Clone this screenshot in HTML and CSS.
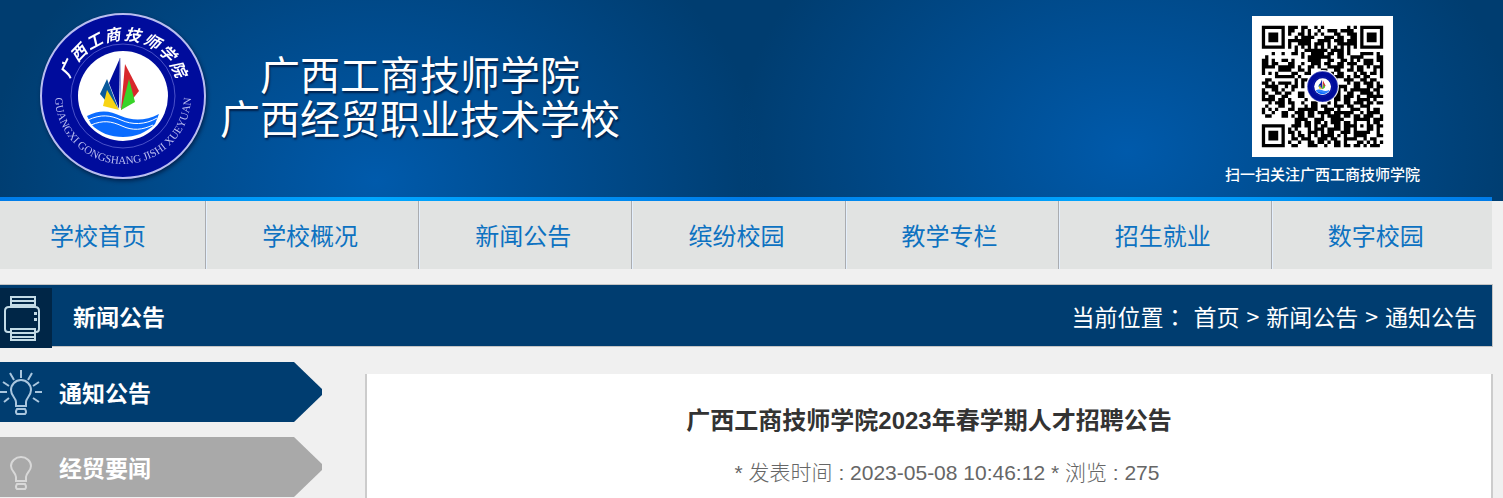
FILE: index.html
```
<!DOCTYPE html>
<html lang="zh-CN">
  <head>
    <meta charset="UTF-8" />
    <meta name="viewport" content="width=device-width, initial-scale=1.0" />
    <title>广西工商技师学院2023年春学期人才招聘公告</title>
    <link rel="stylesheet" href="styles.css" />
  </head>
  <body>
    <header class="header">
      <svg class="logo" viewBox="0 0 166 166" role="img" aria-label="校徽">
        <defs>
          <path id="ring" d="M15 83a68 68 0 0 0 136 0" />
        </defs>
        <g id="badge">
          <circle cx="83" cy="83" r="82" fill="#000c9c" stroke="#b9bdf0" stroke-width="2" />
          <circle cx="83" cy="83" r="52" fill="none" stroke="#4a52c8" />
          <circle cx="83" cy="83" r="45" fill="#fff" />
          <path d="M67 66l-7 15 5 6 13 8z" fill="#0a5a9c" />
          <path d="M80 45L69 70l10 26z" fill="#000c9c" />
          <path d="M80 45l1 50" stroke="#8d92d0" />
          <path d="M85 51l14 27-8 10-10 9z" fill="#d8282c" />
          <path d="M89 66l6 23-14 8z" fill="#38d428" />
          <path d="M67 77l-4 16 16 4z" fill="#f8d414" />
          <path d="M47 103c14-7 23-5 34 0s25 5 38-2l-4 10c-9 9-20 13-32 13s-24-4-32-13z" fill="#0a6cff" />
          <path d="M48 107c13-6 22-5 33 0s24 5 36-2M51 112c12-5 20-4 31 1s20 4 31-1" fill="none" stroke="#fff" />
        </g>
        <g class="seal-name">
          <text x="83" y="27" transform="rotate(-64 83 83)">广</text>
          <text x="83" y="27" transform="rotate(-46 83 83)">西</text>
          <text x="83" y="27" transform="rotate(-28 83 83)">工</text>
          <text x="83" y="27" transform="rotate(-10 83 83)">商</text>
          <text x="83" y="27" transform="rotate(9 83 83)">技</text>
          <text x="83" y="27" transform="rotate(28 83 83)">师</text>
          <text x="83" y="27" transform="rotate(46 83 83)">学</text>
          <text x="83" y="27" transform="rotate(64 83 83)">院</text>
        </g>
        <text class="seal-latin">
          <textPath href="#ring" startOffset="50%">GUANGXI GONGSHANG JISHI XUEYUAN</textPath>
        </text>
      </svg>
      <div class="school">
        <p>广西工商技师学院</p>
        <p>广西经贸职业技术学校</p>
      </div>
      <div class="follow">
        <svg class="qr" viewBox="-3 -3 43 43" role="img" aria-label="二维码">
          <path id="modules" />
          <circle cx="18.5" cy="18.5" r="5" fill="#fff" />
          <use href="#badge" transform="translate(13.8 13.8) scale(.057)" />
        </svg>
        <p>扫一扫关注广西工商技师学院</p>
      </div>
    </header>

    <nav class="nav">
      <a href="#">学校首页</a>
      <a href="#">学校概况</a>
      <a href="#">新闻公告</a>
      <a href="#">缤纷校园</a>
      <a href="#">教学专栏</a>
      <a href="#">招生就业</a>
      <a href="#">数字校园</a>
    </nav>

    <div class="title-bar">
      <svg class="printer" viewBox="0 0 52 60" aria-hidden="true">
        <g fill="none" stroke="#c3dbe6" stroke-width="2">
          <path d="M11 19V9h24v10M11 13h24M11 17h24" />
          <path d="M10 44H8q-3 0-3-3V23q0-4 4-4h26q4 0 4 4v18q0 3-3 3h-1" />
          <path d="M11 41h24v11H11zM11 45h24M11 49h24" />
        </g>
        <path d="M34 24h3v3h-3zM34 30h3v3h-3z" fill="#c3dbe6" />
      </svg>
      <h2>新闻公告</h2>
      <div class="crumbs">
        <span class="crumbs-label" lang="zh-TW">当前位置：</span>
        <a href="#">首页</a>
        <span>&gt;</span>
        <a href="#">新闻公告</a>
        <span>&gt;</span>
        <a href="#">通知公告</a>
      </div>
    </div>

    <div class="main">
      <aside class="side">
        <a class="side-item active" href="#">
          <svg class="bulb" viewBox="0 0 42 60" aria-hidden="true">
            <path d="M16 44v-4c0-4-5-6-5-12a10 10 0 0 1 20 0c0 6-5 8-5 12v4zM17 47h8q2 3 0 5h-8q-2-2 0-5z" />
            <path d="M21 16V8M14 18l-4-7M28 18l4-7M9 24l-6-4M33 24l6-4M7 30H0M35 30h7M9 36l-5 4M33 36l6 4" />
          </svg>
          通知公告
        </a>
        <a class="side-item" href="#">
          <svg class="bulb" viewBox="0 0 42 60" aria-hidden="true">
            <path d="M16 44v-4c0-4-5-6-5-11a10 9 0 0 1 20 0c0 5-5 7-5 11v4zM17 47h8q2 3 0 5h-8q-2-2 0-5z" />
          </svg>
          经贸要闻
        </a>
      </aside>
      <article class="article">
        <h1>广西工商技师学院2023年春学期人才招聘公告</h1>
        <p class="meta">* 发表时间 : 2023-05-08 10:46:12 * 浏览 : 275</p>
      </article>
    </div>

    <script>
      const rows = [
        "#######.###.##..#.#.......#.#.#######",
        "#.....#.##..#.#..#..###.####..#.....#",
        "#.###.#.#..##.#.#.#...##..###.#.###.#",
        "#.###.#...#.####...###.##..##.#.###.#",
        "#.###.#.#######..####.###.###.#.###.#",
        "#.....#.#..####.###.#..######.#.....#",
        "#######.#.#.#.#.#.#.#.#.#.#.#.#######",
        "..........#..#######.####.#..........",
        "...#..#..##.#..####.##.##.#...####.#.",
        ".#..........#.#######..##..####....##",
        "##.#..##.#....####..##..##.#.#.###.##",
        "##.##...##..#..###.##..##.###..###..#",
        "####.#####.#..##.#..#####..#.##.#.###",
        "#....####..##.#...##..##..##.##...#.#",
        "#.#.#....##..##......#.##...#.##.##.#",
        "....######.#..........###.#.##.##...#",
        ".##.......#.##........#..###..##.##..",
        "##.#.####.#.#.............#.##.###.#.",
        ".####..#.##.#..........###..##..##.##",
        "#..##.#..#.............#.#.######.##.",
        "##..##.##..##.........##..##..####.#.",
        "#.##..##...##.........##.###.#..#####",
        "####.##.#....#........##.##..####.#..",
        "..#.###.##..#..##...#.#..##.###.##.##",
        ".#...##..#...#.##.##..###.##..###....",
        "#.#.#...##.######..###.#...###..#.##.",
        "#..#..##..###.##.####.######..#.####.",
        ".##...##.#.##.##..#.####.##.##.###..#",
        "..........####..###..####...#####.###",
        "..........##.##.##.#.###.##.#...#.##.",
        "#######..###.##.#.##..##.####.#.##.##",
        "#.....#.#.#...#.###.####.##.#...##.#.",
        "#.###.#.##.#..###.#.##..###.#####..#.",
        "#.###.#..#.##.#.#.####.#.#..####...##",
        "#.###.#..##.###..###.##..####..#.##..",
        "#.....#.#..#..##.##.#.##.#...##.#.#.#",
        "#######..##...###..#..##.##.##.#.###.",
      ];

      let d = "";
      rows.forEach((row, y) => {
        [...row].forEach((cell, x) => {
          if (cell === "#") d += `M${x} ${y}h1v1h-1z`;
        });
      });
      document.getElementById("modules").setAttribute("d", d);
    </script>
  </body>
</html>
```
FILE: styles.css
```
* {
  margin: 0;
  padding: 0;
  box-sizing: border-box;
}
body {
  font-family: "Liberation Sans", "Noto Sans CJK SC", sans-serif;
  background-color: #f0f0f0;
}
a {
  color: inherit;
  text-decoration: none;
}
.header {
  display: flex;
  align-items: flex-start;
  padding: 13px 83px 0 40px;
  height: 201px;
  color: #fff;
  background:
    radial-gradient(ellipse 26% 150% at 25% 90%, #005aab, #005aab00),
    radial-gradient(ellipse 26% 150% at 75% 75%, #005aab, #005aab00),
    #003d70;
}
.logo {
  width: 166px;
  height: 166px;
  filter: drop-shadow(1px 2px 2px #00204a);
}
.seal-name {
  fill: #fff;
  font-family: "Noto Sans CJK SC", sans-serif;
  font-size: 16px;
  font-style: italic;
  font-weight: 700;
  text-anchor: middle;
}
.seal-latin {
  fill: #b9bdf0;
  font-family: "Liberation Serif", serif;
  font-size: 11px;
  text-anchor: middle;
}
.school {
  margin: 38px 0 0 14px;
  font-family: "Noto Sans CJK SC", sans-serif;
  font-size: 40px;
  line-height: 44px;
  text-align: center;
  text-shadow: 1px 2px 2px #00204a;
}
.follow {
  margin: 3px 0 0 auto;
  font-size: 15px;
  font-weight: 500;
  line-height: 20px;
  text-align: center;
}
.qr {
  display: block;
  width: 141px;
  height: 141px;
  margin: 0 auto 8px;
  background-color: #fff;
}
.nav {
  display: grid;
  grid-template-columns: 206fr repeat(5, 213fr) 220fr;
  margin: -4px 11px 0 0;
  border-top: 4px solid;
  border-image: linear-gradient(90deg, #007be8, #00a8ff 25%, #007be8 50%, #00a8ff 75%, #007be8) 1;
  background-color: #e1e3e2;
}
.nav a {
  padding-left: 56px;
  border-right: 1px solid #aaacb0;
  box-shadow: 1px 0 #e4effc;
  color: #0d72c1;
  font-family: "Noto Sans CJK SC", sans-serif;
  font-size: 24px;
  line-height: 68px;
}
.nav a:first-child {
  padding-left: 50px;
}
.nav a:last-child {
  border-right: none;
  box-shadow: none;
}
.title-bar {
  display: flex;
  align-items: center;
  height: 63px;
  margin: 15px 10px 0 0;
  padding-right: 15px;
  border: 1px solid #c4c4c4;
  border-left: none;
  background-color: #003d70;
  color: #fff;
  font-family: "Noto Sans CJK SC", sans-serif;
  font-size: 23px;
  line-height: 32px;
}
.printer {
  align-self: flex-start;
  width: 52px;
  height: 60px;
  margin-top: 3px;
  background-color: #002647;
}
.title-bar h2 {
  margin-left: 21px;
  font-size: 23px;
}
.crumbs {
  display: flex;
  gap: 7px;
  margin-left: auto;
}
.crumbs-label {
  font-family: "Noto Sans CJK TC", sans-serif;
}
.main {
  display: flex;
  align-items: flex-start;
  gap: 43px;
  padding: 15px 10px 0 0;
}
.side {
  display: flex;
  flex-direction: column;
  gap: 15px;
  width: 322px;
}
.side-item {
  display: flex;
  align-items: center;
  gap: 17px;
  height: 60px;
  background-color: #a9a9a9;
  clip-path: polygon(0 0, 294px 0, 100% 27px, 100% 33px, 294px 100%, 0 100%);
  color: #fff;
  font-family: "Noto Sans CJK SC", sans-serif;
  font-size: 23px;
  font-weight: 700;
}
.side-item.active {
  background-color: #003d70;
}
.bulb {
  width: 42px;
  height: 60px;
  fill: none;
  stroke: #d8d8d8;
  stroke-width: 2;
}
.active .bulb {
  stroke: #a9c6de;
}
.article {
  flex: 1;
  min-height: 140px;
  margin-top: 12px;
  padding-top: 29px;
  border: solid #ccc;
  border-width: 0 2px;
  background-color: #fff;
  text-align: center;
}
.article h1 {
  color: #333;
  font-size: 24px;
  line-height: 36px;
}
.meta {
  margin-top: 18px;
  padding-left: 36px;
  color: #666;
  font-size: 21px;
  font-weight: 300;
  line-height: 32px;
}
```
